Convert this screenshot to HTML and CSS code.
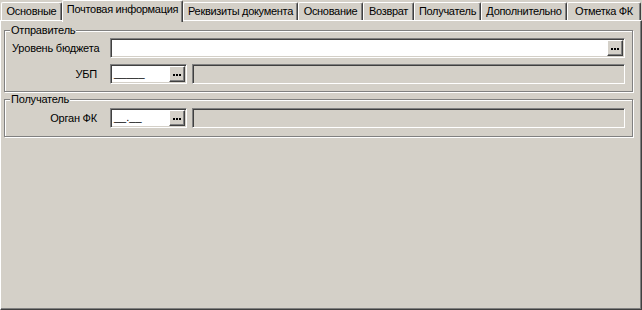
FILE: index.html
```html
<!DOCTYPE html>
<html lang="ru">
<head>
<meta charset="utf-8">
<title>Почтовая информация</title>
<link rel="stylesheet" href="styles.css">
</head>
<body>
<div class="window">
  <div class="tabs">
    <div class="tab t1">Основные</div>
    <div class="tab t2 active">Почтовая информация</div>
    <div class="tab t3">Реквизиты документа</div>
    <div class="tab t4">Основание</div>
    <div class="tab t5">Возврат</div>
    <div class="tab t6">Получатель</div>
    <div class="tab t7">Дополнительно</div>
    <div class="tab t8">Отметка ФК</div>
  </div>
  <div class="page">
    <fieldset class="group g1">
      <legend>Отправитель</legend>
      <div class="row">
        <span class="lbl lbl-left">Уровень бюджета</span>
        <div class="edit wide">
          <span class="val"></span>
          <span class="btn"><svg width="14" height="14" viewBox="0 0 14 14"><rect x="3" y="7" width="2" height="2" fill="#000"/><rect x="6" y="7" width="2" height="2" fill="#000"/><rect x="9" y="7" width="2" height="2" fill="#000"/></svg></span>
        </div>
      </div>
      <div class="row">
        <span class="lbl">УБП</span>
        <div class="edit short">
          <span class="val">_____</span>
          <span class="btn"><svg width="14" height="14" viewBox="0 0 14 14"><rect x="3" y="7" width="2" height="2" fill="#000"/><rect x="6" y="7" width="2" height="2" fill="#000"/><rect x="9" y="7" width="2" height="2" fill="#000"/></svg></span>
        </div>
        <div class="ro"></div>
      </div>
    </fieldset>
    <fieldset class="group g2">
      <legend>Получатель</legend>
      <div class="row">
        <span class="lbl">Орган ФК</span>
        <div class="edit short">
          <span class="val">__.__</span>
          <span class="btn"><svg width="14" height="14" viewBox="0 0 14 14"><rect x="3" y="7" width="2" height="2" fill="#000"/><rect x="6" y="7" width="2" height="2" fill="#000"/><rect x="9" y="7" width="2" height="2" fill="#000"/></svg></span>
        </div>
        <div class="ro"></div>
      </div>
    </fieldset>
  </div>
</div>
</body>
</html>
```
FILE: styles.css
```css
html, body {
  margin: 0;
  padding: 0;
  background: #d4d0c8;
}
body {
  font-family: "Liberation Sans", Arial, sans-serif;
  font-size: 11px;
  letter-spacing: -0.2px;
  color: #000;
}
.window {
  width: 642px;
  height: 310px;
  overflow: hidden;
}
.tabs {
  display: flex;
  align-items: flex-end;
  height: 20px;
  padding-left: 1px;
  position: relative;
  z-index: 1;
}
.tab {
  box-sizing: border-box;
  height: 18px;
  border-top: 1px solid #fff;
  border-left: 1px solid #fff;
  border-right: 1px solid #404040;
  border-radius: 2px 2px 0 0;
  box-shadow: inset -1px 0 0 #808080;
  background: #d4d0c8;
  text-align: center;
  line-height: 17px;
  letter-spacing: -0.3px;
  white-space: nowrap;
  flex: none;
}
.tab.active {
  height: 22px;
  margin-bottom: -2px;
  line-height: 16px;
}
.t1 { width: 61px; }
.t2 { width: 121px; }
.t3 { width: 115px; }
.t4 { width: 65px; }
.t5 { width: 51px; }
.t6 { width: 67px; }
.t7 { width: 86px; }
.t8 { width: 74px; }
.page {
  box-sizing: border-box;
  height: 290px;
  border: 1px solid;
  border-color: #fff #404040 #404040 #fff;
  box-shadow: inset -1px -1px 0 #808080;
  display: flex;
  flex-direction: column;
}
.group {
  margin: 3px 8px 0 3px;
  padding: 1px 7px 7px 0;
  border: 1px solid #808080;
  box-shadow: 1px 1px 0 #fff, inset 1px 1px 0 #fff;
  display: flex;
  flex-direction: column;
  gap: 6px;
  min-width: 0;
}
.g2 {
  margin-top: 1px;
  padding-top: 2px;
  padding-bottom: 8px;
}
.group legend {
  margin-left: 5px;
  padding: 0 1px;
  line-height: 13px;
  background: #d4d0c8;
}
.row {
  display: flex;
  align-items: center;
  height: 20px;
}
.lbl {
  box-sizing: border-box;
  width: 105px;
  flex: none;
  padding-right: 13px;
  text-align: right;
  white-space: nowrap;
}
.lbl-left {
  text-align: left;
  padding-left: 7px;
  padding-right: 0;
}
.edit, .ro {
  box-sizing: border-box;
  height: 20px;
  border: 1px solid;
  border-color: #808080 #fff #fff #808080;
  box-shadow: inset 1px 1px 0 #404040, inset -1px -1px 0 #d4d0c8;
}
.edit {
  background: #fff;
  display: flex;
  justify-content: space-between;
  padding: 1px;
}
.wide { flex: 1; }
.short { width: 77px; flex: none; margin-right: 5px; }
.ro {
  flex: 1;
  background: #d4d0c8;
}
.val {
  padding-left: 2px;
  line-height: 15px;
  letter-spacing: 0;
  white-space: nowrap;
}
.btn {
  box-sizing: border-box;
  width: 16px;
  height: 16px;
  background: #d4d0c8;
  border: 1px solid;
  border-color: #fff #404040 #404040 #fff;
  box-shadow: inset -1px -1px 0 #808080;
  display: flex;
}
.btn svg { display: block; }
```
